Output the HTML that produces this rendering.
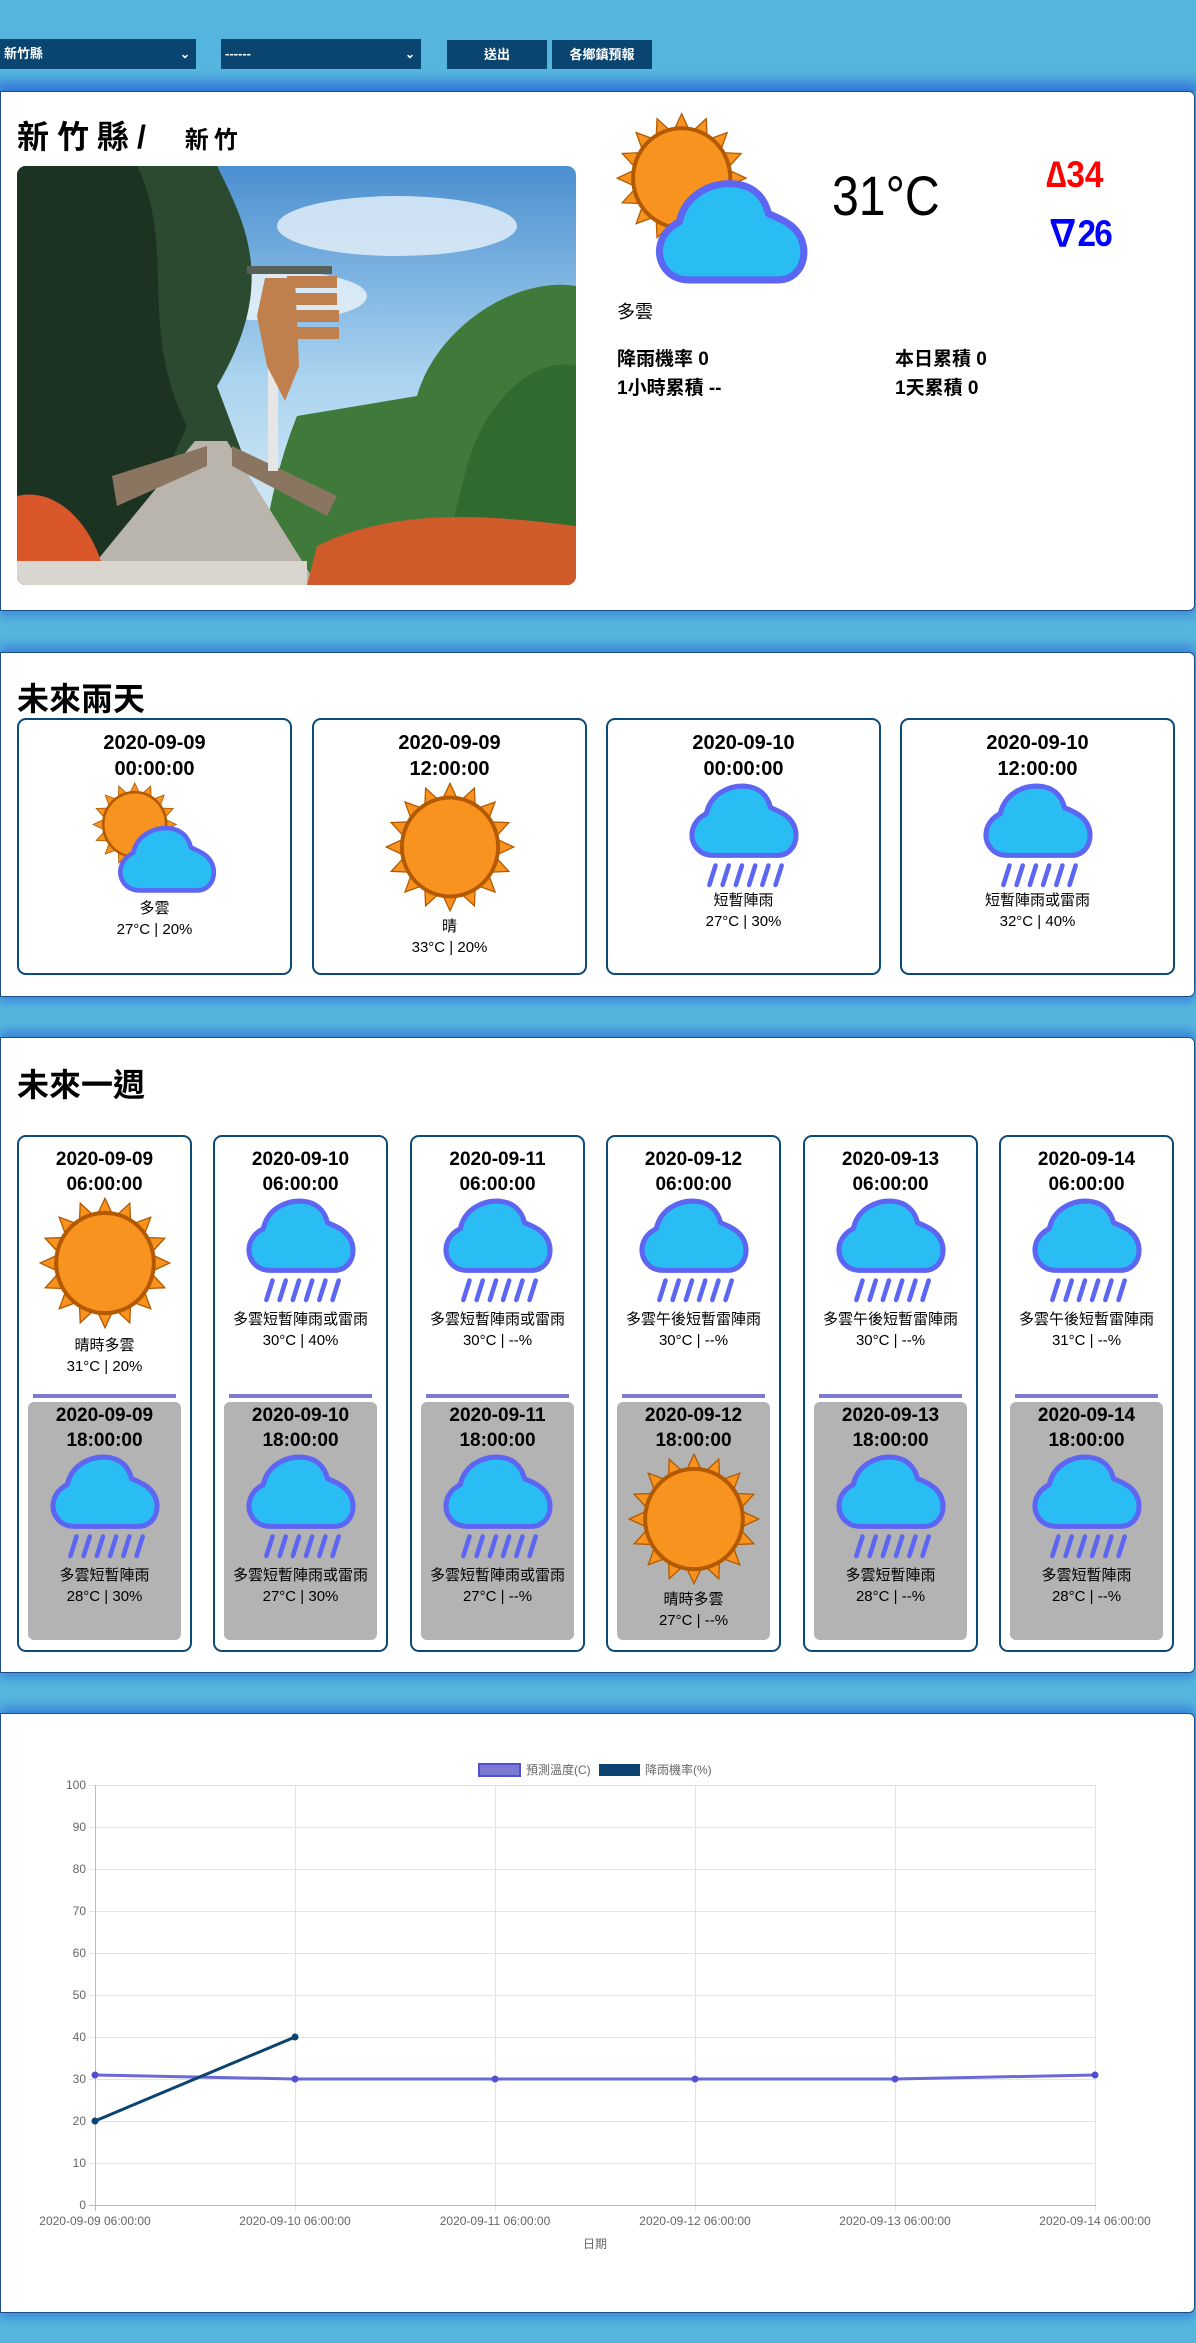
<!DOCTYPE html>
<html><head><meta charset="utf-8">
<style>
*{box-sizing:border-box;margin:0;padding:0}
body{width:1196px;height:2343px;background:#56b5de;position:relative;overflow:hidden;font-family:"Liberation Sans","Noto Sans CJK TC",sans-serif;color:#000}
.a{position:absolute}
.sel{position:absolute;top:39px;height:30px;background:#0a4470;color:#fff;font-size:13px;font-weight:bold;line-height:30px;padding-left:4px}
.sel span{position:absolute;right:6px;top:0;font-size:12px}
.btn{position:absolute;top:40px;height:29px;background:#0a4470;color:#fff;font-size:13px;font-weight:bold;line-height:29px;text-align:center}
.card{position:absolute;left:0;width:1195px;background:#fff;border:1px solid #1d4f86;border-radius:0 6px 6px 0;box-shadow:0 -7px 9px rgba(40,100,215,.55),0 6px 8px rgba(40,100,215,.45)}
.h{font-weight:bold;font-size:32px;position:absolute;left:17px}
.tb{position:absolute;top:718px;width:275px;height:257px;border:2px solid #0b4a7a;border-radius:9px;text-align:center;background:#fff}
.wb{position:absolute;top:1135px;width:175px;height:517px;border:2px solid #0b4a7a;border-radius:9px;text-align:center;background:#fff}
.dt{font-weight:bold;font-size:19px;line-height:25px}
.tb .dt{font-size:20px;line-height:26px}
.ds{font-size:15px;line-height:21px}
.ln{position:absolute;top:257px;left:14px;right:14px;height:4px;background:#7b7bd6}
.gr{position:absolute;top:265px;left:9px;right:9px;height:238px;background:#b3b3b3;border-radius:6px}
svg.i{display:block;margin:0 auto}
</style></head><body>
<svg width="0" height="0" style="position:absolute">
<defs>
<symbol id="sun" viewBox="0 0 100 100">
<g fill="#f7931e" stroke="#b35900" stroke-width="1">
<polygon points="50,1 43,16 57,16"/>
<polygon points="50,1 43,16 57,16" transform="rotate(22.5 50 50)"/>
<polygon points="50,1 43,16 57,16" transform="rotate(45 50 50)"/>
<polygon points="50,1 43,16 57,16" transform="rotate(67.5 50 50)"/>
<polygon points="50,1 43,16 57,16" transform="rotate(90 50 50)"/>
<polygon points="50,1 43,16 57,16" transform="rotate(112.5 50 50)"/>
<polygon points="50,1 43,16 57,16" transform="rotate(135 50 50)"/>
<polygon points="50,1 43,16 57,16" transform="rotate(157.5 50 50)"/>
<polygon points="50,1 43,16 57,16" transform="rotate(180 50 50)"/>
<polygon points="50,1 43,16 57,16" transform="rotate(202.5 50 50)"/>
<polygon points="50,1 43,16 57,16" transform="rotate(225 50 50)"/>
<polygon points="50,1 43,16 57,16" transform="rotate(247.5 50 50)"/>
<polygon points="50,1 43,16 57,16" transform="rotate(270 50 50)"/>
<polygon points="50,1 43,16 57,16" transform="rotate(292.5 50 50)"/>
<polygon points="50,1 43,16 57,16" transform="rotate(315 50 50)"/>
<polygon points="50,1 43,16 57,16" transform="rotate(337.5 50 50)"/>
</g>
<ellipse cx="50" cy="50" rx="37" ry="38" fill="#f7931e" stroke="#b35900" stroke-width="3"/>
</symbol>
<symbol id="cloud" viewBox="0 0 110 76">
<path d="M25,72 C10,72 3,60 4,50 C5,40 12,34 18,31 C22,12 40,3 56,4 C70,5 78,13 81,25 C86,28 104,32 106,50 C107,64 98,72 88,72 Z" fill="#29bdf4" stroke="#5c66f2" stroke-width="5" stroke-linejoin="round"/>
</symbol>
<symbol id="rain" viewBox="0 0 110 104">
<use href="#cloud" x="0" y="0" width="110" height="76"/>
<g stroke="#5c66f2" stroke-width="4.5" stroke-linecap="round">
<line x1="21" y1="101" x2="27" y2="82"/><line x1="34" y1="101" x2="40" y2="82"/><line x1="47" y1="101" x2="53" y2="82"/><line x1="60" y1="101" x2="66" y2="82"/><line x1="73" y1="101" x2="79" y2="82"/><line x1="86" y1="101" x2="92" y2="82"/>
</g>
</symbol>
<symbol id="sc" viewBox="0 0 130 118">
<use href="#sun" x="0" y="0" width="88" height="88"/>
<use href="#cloud" x="25" y="44" width="105" height="72"/>
</symbol>
</defs>
</svg>

<!-- top bar -->
<div class="a" style="left:0;top:70px;width:1196px;height:22px;background:linear-gradient(#56b5de,#3f8fd9)"></div>
<div class="sel" style="left:0;width:196px">新竹縣<span>⌄</span></div>
<div class="sel" style="left:221px;width:200px">------<span>⌄</span></div>
<div class="btn" style="left:447px;width:100px">送出</div>
<div class="btn" style="left:552px;width:100px">各鄉鎮預報</div>

<!-- card 1 -->
<div class="card" style="top:91px;height:520px"></div>
<div class="a" style="left:17px;top:112px;font-size:32px;font-weight:bold;letter-spacing:8px">新竹縣/ <span style="font-size:24px;letter-spacing:5px;margin-left:14px">新竹</span></div>
<svg class="a" style="left:17px;top:166px" width="559" height="419" viewBox="0 0 559 419">
<defs>
<clipPath id="cp"><rect width="559" height="419" rx="9"/></clipPath>
<linearGradient id="sky" x1="0" y1="0" x2="0" y2="1"><stop offset="0" stop-color="#4b8fd0"/><stop offset=".5" stop-color="#a9d3ef"/><stop offset="1" stop-color="#e6f2f8"/></linearGradient>
</defs>
<g clip-path="url(#cp)">
<rect width="559" height="419" fill="url(#sky)"/>
<ellipse cx="380" cy="60" rx="120" ry="30" fill="#e8f2fa" opacity=".8"/>
<ellipse cx="260" cy="130" rx="90" ry="25" fill="#eef5fa" opacity=".8"/>
<path d="M0,0 L200,0 C230,60 260,120 200,220 L230,300 L150,419 L0,419Z" fill="#2c4a30"/>
<path d="M0,0 L120,0 C160,80 120,160 170,260 L100,419 L0,419Z" fill="#1d3322"/>
<path d="M559,120 C500,110 420,160 400,230 L280,250 C260,300 250,350 240,419 L559,419Z" fill="#3f7a3a"/>
<path d="M559,200 C520,190 470,230 450,300 L420,419 L559,419Z" fill="#2f6a2e"/>
<path d="M178,275 L210,275 L300,419 L60,419Z" fill="#b9b5ad"/>
<path d="M95,310 L190,280 L190,300 L100,340Z" fill="#8a7660"/>
<path d="M215,280 L320,330 L310,350 L215,300Z" fill="#8a7660"/>
<path d="M0,330 C40,320 80,360 90,419 L0,419Z" fill="#d8562a"/>
<path d="M300,380 C380,340 480,350 559,360 L559,419 L290,419Z" fill="#cf5a2a"/>
<rect x="0" y="395" width="290" height="24" fill="#d9d6d0"/>
<rect x="251" y="105" width="10" height="200" fill="#e6e6e6"/>
<rect x="230" y="100" width="85" height="8" fill="#566058"/>
<path d="M248,112 L278,112 L282,200 L268,235 L250,200 L240,150Z" fill="#c0804e"/>
<rect x="270" y="110" width="50" height="12" fill="#c0804e"/><rect x="270" y="127" width="50" height="12" fill="#c0804e"/><rect x="272" y="144" width="50" height="12" fill="#c0804e"/><rect x="272" y="161" width="50" height="12" fill="#c0804e"/>
</g>
</svg>
<svg class="a" style="left:616px;top:112px" width="194" height="177"><use href="#sc" width="194" height="177"/></svg>
<div class="a" style="left:832px;top:163px;font-size:56px;line-height:66px;transform:scaleX(.86);transform-origin:0 0">31°C</div>
<div class="a" style="left:1046px;top:154px;font-size:37px;font-weight:bold;color:#f00;transform:scaleX(.9);transform-origin:0 0">∆34</div>
<div class="a" style="left:1046px;top:203px;font-size:37px;font-weight:bold;color:#00f;transform:scaleX(.9);transform-origin:0 0;letter-spacing:-2px">∇26</div>
<div class="a" style="left:617px;top:298px;font-size:18px">多雲</div>
<div class="a" style="left:617px;top:345px;font-size:19px;font-weight:bold;line-height:29px">降雨機率 0<br>1小時累積 --</div>
<div class="a" style="left:895px;top:345px;font-size:19px;font-weight:bold;line-height:29px">本日累積 0<br>1天累積 0</div>

<!-- card 2 -->
<div class="card" style="top:652px;height:345px"></div>
<div class="h" style="top:674px">未來兩天</div>
<div class="tb" style="left:17px"><div style="padding-top:10px" class="dt">2020-09-09<br>00:00:00</div><svg class="i" width="126" height="114"><use href="#sc" width="126" height="114"/></svg><div class="ds" style="margin-top:2px">多雲<br>27°C | 20%</div></div>
<div class="tb" style="left:312px"><div style="padding-top:10px" class="dt">2020-09-09<br>12:00:00</div><svg class="i" width="130" height="130"><use href="#sun" width="130" height="130"/></svg><div class="ds" style="margin-top:4px">晴<br>33°C | 20%</div></div>
<div class="tb" style="left:606px"><div style="padding-top:10px" class="dt">2020-09-10<br>00:00:00</div><svg class="i" width="112" height="106"><use href="#rain" width="112" height="106"/></svg><div class="ds" style="margin-top:2px">短暫陣雨<br>27°C | 30%</div></div>
<div class="tb" style="left:900px"><div style="padding-top:10px" class="dt">2020-09-10<br>12:00:00</div><svg class="i" width="112" height="106"><use href="#rain" width="112" height="106"/></svg><div class="ds" style="margin-top:2px">短暫陣雨或雷雨<br>32°C | 40%</div></div>

<!-- card 3 -->
<div class="card" style="top:1037px;height:636px"></div>
<div class="h" style="top:1060px">未來一週</div>

<div class="wb" style="left:17px"><div style="padding-top:10px" class="dt">2020-09-09<br>06:00:00</div><svg class="i" width="132" height="132"><use href="#sun" width="132" height="132"/></svg><div class="ds" style="margin-top:6px">晴時多雲<br>31°C | 20%</div><div class="ln"></div>
<div class="gr"><div class="dt" style="padding-top:1px">2020-09-09<br>18:00:00</div><svg class="i" width="112" height="106"><use href="#rain" width="112" height="106"/></svg><div class="ds" style="margin-top:6px">多雲短暫陣雨<br>28°C | 30%</div></div></div>

<div class="wb" style="left:213px"><div style="padding-top:10px" class="dt">2020-09-10<br>06:00:00</div><svg class="i" width="112" height="106"><use href="#rain" width="112" height="106"/></svg><div class="ds" style="margin-top:6px">多雲短暫陣雨或雷雨<br>30°C | 40%</div><div class="ln"></div>
<div class="gr"><div class="dt" style="padding-top:1px">2020-09-10<br>18:00:00</div><svg class="i" width="112" height="106"><use href="#rain" width="112" height="106"/></svg><div class="ds" style="margin-top:6px">多雲短暫陣雨或雷雨<br>27°C | 30%</div></div></div>

<div class="wb" style="left:410px"><div style="padding-top:10px" class="dt">2020-09-11<br>06:00:00</div><svg class="i" width="112" height="106"><use href="#rain" width="112" height="106"/></svg><div class="ds" style="margin-top:6px">多雲短暫陣雨或雷雨<br>30°C | --%</div><div class="ln"></div>
<div class="gr"><div class="dt" style="padding-top:1px">2020-09-11<br>18:00:00</div><svg class="i" width="112" height="106"><use href="#rain" width="112" height="106"/></svg><div class="ds" style="margin-top:6px">多雲短暫陣雨或雷雨<br>27°C | --%</div></div></div>

<div class="wb" style="left:606px"><div style="padding-top:10px" class="dt">2020-09-12<br>06:00:00</div><svg class="i" width="112" height="106"><use href="#rain" width="112" height="106"/></svg><div class="ds" style="margin-top:6px">多雲午後短暫雷陣雨<br>30°C | --%</div><div class="ln"></div>
<div class="gr"><div class="dt" style="padding-top:1px">2020-09-12<br>18:00:00</div><svg class="i" width="132" height="132"><use href="#sun" width="132" height="132"/></svg><div class="ds" style="margin-top:4px">晴時多雲<br>27°C | --%</div></div></div>

<div class="wb" style="left:803px"><div style="padding-top:10px" class="dt">2020-09-13<br>06:00:00</div><svg class="i" width="112" height="106"><use href="#rain" width="112" height="106"/></svg><div class="ds" style="margin-top:6px">多雲午後短暫雷陣雨<br>30°C | --%</div><div class="ln"></div>
<div class="gr"><div class="dt" style="padding-top:1px">2020-09-13<br>18:00:00</div><svg class="i" width="112" height="106"><use href="#rain" width="112" height="106"/></svg><div class="ds" style="margin-top:6px">多雲短暫陣雨<br>28°C | --%</div></div></div>

<div class="wb" style="left:999px"><div style="padding-top:10px" class="dt">2020-09-14<br>06:00:00</div><svg class="i" width="112" height="106"><use href="#rain" width="112" height="106"/></svg><div class="ds" style="margin-top:6px">多雲午後短暫雷陣雨<br>31°C | --%</div><div class="ln"></div>
<div class="gr"><div class="dt" style="padding-top:1px">2020-09-14<br>18:00:00</div><svg class="i" width="112" height="106"><use href="#rain" width="112" height="106"/></svg><div class="ds" style="margin-top:6px">多雲短暫陣雨<br>28°C | --%</div></div></div>

<!-- card 4 chart -->
<div class="card" style="top:1713px;height:600px"></div>
<svg class="a" style="left:0;top:1713px" width="1196" height="600" font-family="Liberation Sans, Noto Sans CJK TC, sans-serif" font-size="12" fill="#666">
<rect x="479" y="51" width="41" height="12" fill="#7b7bd6" stroke="#5050d0" stroke-width="2"/>
<text x="526" y="61">預測溫度(C)</text>
<rect x="599" y="51" width="41" height="12" fill="#0b4470"/>
<text x="645" y="61">降雨機率(%)</text>
<g stroke="#e3e3e3" stroke-width="1">
<line x1="89" y1="72.5" x2="1096" y2="72.5"/><line x1="89" y1="114.5" x2="1096" y2="114.5"/><line x1="89" y1="156.5" x2="1096" y2="156.5"/><line x1="89" y1="198.5" x2="1096" y2="198.5"/><line x1="89" y1="240.5" x2="1096" y2="240.5"/><line x1="89" y1="282.5" x2="1096" y2="282.5"/><line x1="89" y1="324.5" x2="1096" y2="324.5"/><line x1="89" y1="366.5" x2="1096" y2="366.5"/><line x1="89" y1="408.5" x2="1096" y2="408.5"/><line x1="89" y1="450.5" x2="1096" y2="450.5"/>
<line x1="295.5" y1="72" x2="295.5" y2="498"/><line x1="495.5" y1="72" x2="495.5" y2="498"/><line x1="695.5" y1="72" x2="695.5" y2="498"/><line x1="895.5" y1="72" x2="895.5" y2="498"/><line x1="1095.5" y1="72" x2="1095.5" y2="498"/>
</g>
<line x1="95.5" y1="72" x2="95.5" y2="498" stroke="#bbb"/>
<line x1="89" y1="492.5" x2="1096" y2="492.5" stroke="#bbb"/>
<g text-anchor="end">
<text x="86" y="76">100</text><text x="86" y="118">90</text><text x="86" y="160">80</text><text x="86" y="202">70</text><text x="86" y="244">60</text><text x="86" y="286">50</text><text x="86" y="328">40</text><text x="86" y="370">30</text><text x="86" y="412">20</text><text x="86" y="454">10</text><text x="86" y="496">0</text>
</g>
<g text-anchor="middle">
<text x="95" y="512">2020-09-09 06:00:00</text><text x="295" y="512">2020-09-10 06:00:00</text><text x="495" y="512">2020-09-11 06:00:00</text><text x="695" y="512">2020-09-12 06:00:00</text><text x="895" y="512">2020-09-13 06:00:00</text><text x="1095" y="512">2020-09-14 06:00:00</text>
<text x="595" y="535">日期</text>
</g>
<polyline points="95,362 295,366 495,366 695,366 895,366 1095,362" fill="none" stroke="#6a6ad6" stroke-width="3"/>
<g fill="#5050d0"><circle cx="95" cy="362" r="3.5"/><circle cx="295" cy="366" r="3.5"/><circle cx="495" cy="366" r="3.5"/><circle cx="695" cy="366" r="3.5"/><circle cx="895" cy="366" r="3.5"/><circle cx="1095" cy="362" r="3.5"/></g>
<polyline points="95,408 295,324" fill="none" stroke="#0b4470" stroke-width="3"/>
<g fill="#0b4470"><circle cx="95" cy="408" r="3.5"/><circle cx="295" cy="324" r="3.5"/></g>
</svg>
</body></html>
